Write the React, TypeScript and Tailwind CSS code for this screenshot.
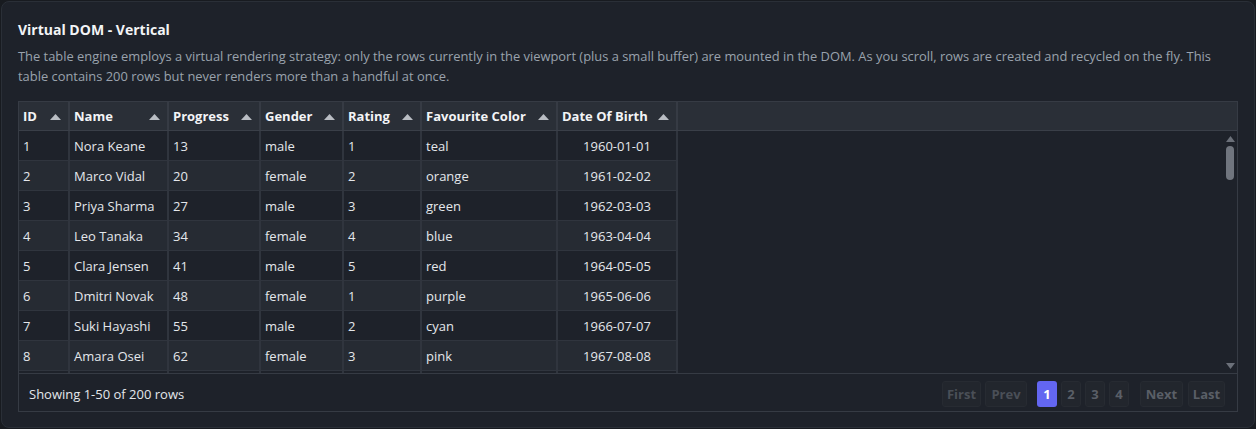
import React from "react";

const rows = [
  [1, "Nora Keane", 13, "male", 1, "teal", "1960-01-01"],
  [2, "Marco Vidal", 20, "female", 2, "orange", "1961-02-02"],
  [3, "Priya Sharma", 27, "male", 3, "green", "1962-03-03"],
  [4, "Leo Tanaka", 34, "female", 4, "blue", "1963-04-04"],
  [5, "Clara Jensen", 41, "male", 5, "red", "1964-05-05"],
  [6, "Dmitri Novak", 48, "female", 1, "purple", "1965-06-06"],
  [7, "Suki Hayashi", 55, "male", 2, "cyan", "1966-07-07"],
  [8, "Amara Osei", 62, "female", 3, "pink", "1967-08-08"],
  [9, "Tomas Reyes", 69, "male", 4, "yellow", "1968-09-09"],
];

const cols = [
  { name: "ID", w: "w-[51px]" },
  { name: "Name", w: "w-[99px]" },
  { name: "Progress", w: "w-[92px]" },
  { name: "Gender", w: "w-[83px]" },
  { name: "Rating", w: "w-[78px]" },
  { name: "Favourite Color", w: "w-[136px]" },
  { name: "Date Of Birth", w: "w-[120px]" },
];

function Arrow() {
  return (
    <svg width="11" height="6" viewBox="0 0 11 6" className="shrink-0">
      <path d="M5.5 0 L11 6 L0 6 Z" fill="#b9bdc3" />
    </svg>
  );
}

const btn = "h-[26px] rounded-[3px] border border-[#272b32] bg-[#22262d] leading-[24px]";

export default function App() {
  return (
    <div className="min-h-screen bg-[#181b20] p-[1px]" style={{ fontFamily: '"Open Sans", "Noto Sans", sans-serif' }}>
      <div className="h-[427px] rounded-lg border border-[#2a2f37] bg-[#1e222a] px-[16px] pt-[18px]">
        <div className="text-[14px] font-bold leading-[20px] text-[#f3f4f6]">Virtual DOM - Vertical</div>
        <p className="mt-[6px] text-[12.9px] leading-[20px] text-[#9aa2ad]">
          The table engine employs a virtual rendering strategy: only the rows currently in the viewport (plus a small buffer) are mounted in the DOM. As you scroll, rows are created and recycled on the fly. This
          <br />
          table contains 200 rows but never renders more than a handful at once.
        </p>
        <div className="mt-[15px] w-[1220px] border border-[#363b44]">
          {/* header */}
          <div className="flex h-[29px] bg-[#2a2f37] border-b border-[#3a3f48]">
            {cols.map((c) => (
              <div key={c.name} className={`${c.w} shrink-0 flex items-center justify-between pl-[4px] pr-[7px] pt-[2px] border-r-2 border-[#363b44] text-[13px] font-bold text-[#f3f4f6]`}>
                <span>{c.name}</span>
                <Arrow />
              </div>
            ))}
            <div className="flex-1" />
          </div>
          {/* body */}
          <div className="relative h-[242px] overflow-hidden">
            {rows.map((r, i) => (
              <div key={i} className={`flex h-[30px] ${i % 2 === 1 ? "bg-[#262b33]" : "bg-[#1e222a]"}`}>
                {r.map((v, j) => (
                  <div
                    key={j}
                    className={`${cols[j].w} shrink-0 flex items-center px-[4px] pt-[2px] border-r-2 border-b border-[#30353e] text-[13px] text-[#e4e7eb] ${j === 6 ? "justify-center" : ""}`}
                  >
                    {v}
                  </div>
                ))}
                <div className="flex-1 bg-[#1e222a]" />
              </div>
            ))}
            {/* scrollbar */}
            <div className="absolute right-0 top-0 bottom-0 w-[14px] flex flex-col items-center pt-[5px] pb-[4px]">
              <svg width="9" height="6" viewBox="0 0 9 6">
                <path d="M4.5 0 L9 6 L0 6 Z" fill="#6b7079" />
              </svg>
              <div className="mt-[4px] h-[34px] w-[8px] rounded-full bg-[#70757e]" />
              <div className="flex-1" />
              <svg width="9" height="6" viewBox="0 0 9 6">
                <path d="M0 0 L9 0 L4.5 6 Z" fill="#6b7079" />
              </svg>
            </div>
          </div>
          {/* footer */}
          <div className="flex h-[38px] items-center justify-between border-t border-[#363b44] pl-[10px] pr-[12px] pt-[2px]">
            <span className="text-[13px] leading-[20px] text-[#e4e7eb]">Showing 1-50 of 200 rows</span>
            <div className="flex items-center text-[13px] font-bold">
              <button className={`${btn} w-[39px] text-[#4a4f57]`}>First</button>
              <button className={`${btn} ml-[4px] w-[42px] text-[#4a4f57]`}>Prev</button>
              <button className="ml-[10px] h-[26px] w-[20px] rounded-[3px] bg-[#6366f1] leading-[26px] text-white">1</button>
              <button className={`${btn} ml-[4px] w-[20px] text-[#5a5f67]`}>2</button>
              <button className={`${btn} ml-[4px] w-[20px] text-[#5a5f67]`}>3</button>
              <button className={`${btn} ml-[4px] w-[20px] text-[#5a5f67]`}>4</button>
              <button className={`${btn} ml-[11px] w-[43px] text-[#5a5f67]`}>Next</button>
              <button className={`${btn} ml-[5px] w-[37px] text-[#5a5f67]`}>Last</button>
            </div>
          </div>
        </div>
      </div>
    </div>
  );
}
